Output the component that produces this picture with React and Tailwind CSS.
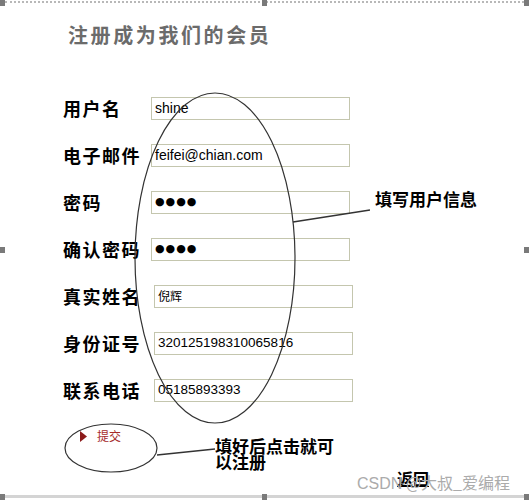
import React from "react";

const rows = [
  { label: "用户名", value: "shine", pad: "w-[88px]", box: "w-[199px]", text: "text-[14px]" },
  { label: "电子邮件", value: "feifei@chian.com", pad: "w-[88px]", box: "w-[199px]", text: "text-[14px]" },
  { label: "密码", value: "●●●●", pad: "w-[88px]", box: "w-[199px]", text: "text-[11px] tracking-[1px]", dots: true },
  { label: "确认密码", value: "●●●●", pad: "w-[88px]", box: "w-[199px]", text: "text-[11px] tracking-[1px]", dots: true },
  { label: "真实姓名", value: "倪辉", pad: "w-[91px]", box: "w-[199px]", text: "text-[12px]" },
  { label: "身份证号", value: "320125198310065816", pad: "w-[91px]", box: "w-[199px]", text: "text-[13.5px]" },
  { label: "联系电话", value: "05185893393", pad: "w-[91px]", box: "w-[199px]", text: "text-[13.5px]" },
];

function Handle({ cls }) {
  return <div className={`absolute w-[5px] h-[6px] bg-[#7a7a7a] ${cls}`} />;
}

export default function App() {
  const cjk = { fontFamily: '"Noto Sans CJK SC", "Liberation Sans", sans-serif' };
  return (
    <div className="relative w-[529px] h-[500px] bg-white overflow-hidden" style={cjk}>
      {/* frame */}
      <div className="absolute left-[5px] right-[5px] top-[1px] border-t-2 border-dotted border-[#b8b8b8]" />
      <div className="absolute left-0 right-0 top-[495px] h-[3px] bg-[#d4d4d4]" />
      <Handle cls="left-0 top-0" />
      <Handle cls="left-[262px] top-0" />
      <Handle cls="left-[524px] top-0" />
      <Handle cls="left-0 top-[247px]" />
      <Handle cls="left-[524px] top-[247px]" />
      <Handle cls="left-0 top-[494px]" />
      <Handle cls="left-[262px] top-[494px]" />
      <Handle cls="left-[524px] top-[494px]" />

      {/* content */}
      <div className="flex flex-col pt-[21px]">
        <h1 className="pl-[68px] text-[20px] leading-[28px] font-bold text-[#6b6b6b] tracking-[2.6px]">
          注册成为我们的会员
        </h1>

        <div className="flex flex-col gap-[24px] mt-[48px]">
          {rows.map((r) => (
            <div key={r.label} className="flex items-center pl-[63px] h-[23px]">
              <div className={`${r.pad} shrink-0 text-[18px] font-bold tracking-[1.5px] text-black leading-[23px] whitespace-nowrap`}>
                {r.label}
              </div>
              <div
                className={`${r.box} h-[23px] border border-[#c4c6ae] bg-white flex items-center pl-[3px] ${r.text} text-black overflow-hidden whitespace-nowrap`}
                style={r.dots ? { fontFamily: '"DejaVu Sans", sans-serif' } : { fontFamily: '"Liberation Sans", "Noto Sans CJK SC", sans-serif' }}
              >
                {r.value}
              </div>
            </div>
          ))}
        </div>

        {/* submit */}
        <div className="flex items-center gap-[10px] pl-[80px] mt-[28px] h-[12px]">
          <svg width="7" height="11" viewBox="0 0 7 11">
            <polygon points="0,0 7,5.5 0,11" fill="#8b1a1a" />
          </svg>
          <span className="text-[12px] leading-[12px] text-[#a52a2a]">提交</span>
        </div>

        <div className="pl-[397px] mt-[24px]">
          <span className="text-[16px] leading-[18px] text-black underline font-bold">返回</span>
        </div>
      </div>

      {/* annotations */}
      <div className="absolute left-[375px] top-[188px] text-[17px] font-bold leading-[22px] text-black">
        填写用户信息
      </div>
      <div className="absolute left-[215px] top-[438px] text-[17px] font-bold leading-[16px] text-black">
        填好后点击就可
        <br />
        以注册
      </div>
      <svg className="absolute inset-0 pointer-events-none" width="529" height="500">
        <ellipse cx="215" cy="258" rx="80" ry="165" fill="none" stroke="#333" strokeWidth="1.2" />
        <line x1="293" y1="222" x2="370" y2="210" stroke="#333" strokeWidth="1.3" />
        <ellipse cx="111" cy="448" rx="46" ry="24" fill="none" stroke="#333" strokeWidth="1.2" />
        <line x1="157" y1="455" x2="215" y2="449" stroke="#333" strokeWidth="1.3" />
      </svg>
      <div className="absolute left-[357px] top-[472px] text-[16px] leading-[20px] text-[#ababab] whitespace-nowrap">
        <span style={{ fontFamily: '"Liberation Sans", sans-serif' }}>CSDN</span> @大叔_爱编程
      </div>
    </div>
  );
}
